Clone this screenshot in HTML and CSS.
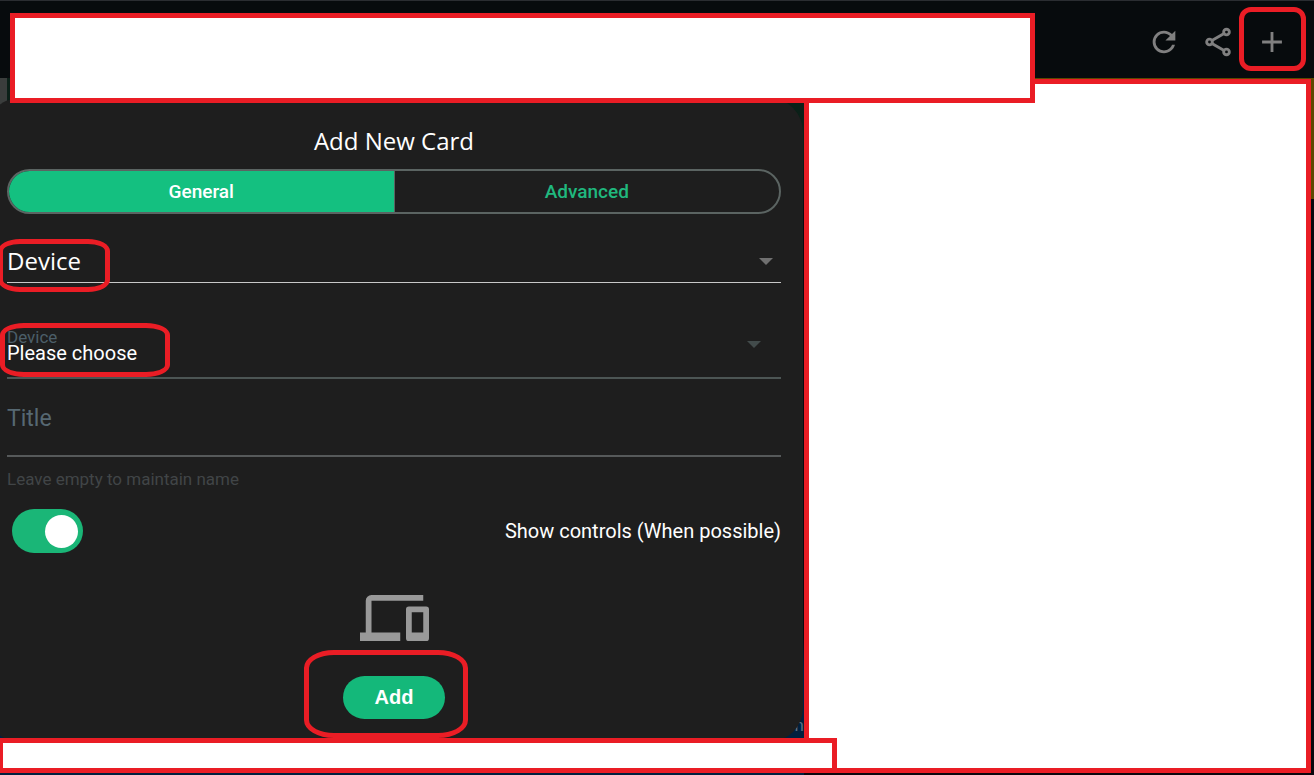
FILE: index.html
```html
<!DOCTYPE html>
<html lang="en">
<head>
    <meta charset="UTF-8">
    <meta name="viewport" content="width=device-width, initial-scale=1.0">
    <title>Add New Card</title>
    <link rel="stylesheet" href="styles.css">
</head>
<body>
    <header class="topbar">
        <button type="button" class="icon-btn" aria-label="Refresh">
            <svg viewBox="0 0 24 24"><path d="M17.65,6.35C16.2,4.9 14.21,4 12,4A8,8 0 0,0 4,12A8,8 0 0,0 12,20C15.73,20 18.84,17.45 19.73,14H17.65C16.83,16.33 14.61,18 12,18A6,6 0 0,1 6,12A6,6 0 0,1 12,6C13.66,6 15.14,6.69 16.22,7.78L13,11H20V4L17.65,6.35Z"/></svg>
        </button>
        <button type="button" class="icon-btn" aria-label="Share">
            <svg viewBox="0 0 24 24" class="outline"><path d="M16.3 6L7.7 11M7.7 13L16.3 18"/><circle cx="18" cy="5" r="2"/><circle cx="6" cy="12" r="2"/><circle cx="18" cy="19" r="2"/></svg>
        </button>
        <button type="button" class="icon-btn mark mark-plus" aria-label="Add card">
            <svg viewBox="0 0 24 24"><path d="M19,13H13V19H11V13H5V11H11V5H13V11H19V13Z"/></svg>
        </button>
    </header>

    <main class="board">
        <section class="backdrop">
            <span class="behind">n</span>
            <form class="panel">
                <h1>Add New Card</h1>
                <div class="tabs">
                    <button type="button" class="tab active">General</button>
                    <button type="button" class="tab">Advanced</button>
                </div>

                <div class="field field-type mark mark-type">
                    <select id="type" name="type" aria-label="Card type">
                        <option>Device</option>
                    </select>
                    <svg class="caret" viewBox="0 0 14 7"><path d="M0 0H14L7 7Z"/></svg>
                </div>

                <div class="field field-device mark mark-device">
                    <label for="device">Device</label>
                    <select id="device" name="device">
                        <option>Please choose</option>
                    </select>
                    <svg class="caret" viewBox="0 0 14 7"><path d="M0 0H14L7 7Z"/></svg>
                </div>

                <div class="field field-title">
                    <label for="title">Title</label>
                    <input type="text" id="title" name="title">
                </div>
                <p class="hint">Leave empty to maintain name</p>

                <div class="switch-row">
                    <input type="checkbox" id="controls" name="controls" class="switch" checked>
                    <label for="controls">Show controls (When possible)</label>
                </div>

                <svg class="devices" viewBox="0 4 24 16"><path d="M4,6H22V4H4A2,2 0 0,0 2,6V17H0V20H14V17H4V6M23,8H17A1,1 0 0,0 16,9V19A1,1 0 0,0 17,20H23A1,1 0 0,0 24,19V9A1,1 0 0,0 23,8M22,17H18V10H22V17Z"/></svg>
                <div class="mark mark-add">
                    <button type="submit" class="add-btn">Add</button>
                </div>
            </form>
        </section>
        <section class="cover cover-side"></section>
    </main>

    <!-- blanked out areas -->
    <div class="cover cover-top"></div>
    <div class="cover cover-bottom"></div>
</body>
</html>
```
FILE: styles.css
```css
*,
*::before,
*::after {
    box-sizing: border-box;
}
body {
    display: flex;
    flex-direction: column;
    position: relative;
    min-height: 100vh;
    margin: 0;
    overflow-x: hidden;
    background-color: #0b070e;
    font-family: Roboto, sans-serif;
    font-size: 20px;
    color: white;
}
button,
input,
select {
    margin: 0;
    padding: 0;
    border: none;
    background: none;
    color: inherit;
    font: inherit;
}

/* top bar */
.topbar {
    display: flex;
    justify-content: flex-end;
    height: 78px;
    padding: 6px 15px 0;
    border-top: 1px solid #2a2d31;
    background-color: #070b0d;
}
.icon-btn {
    display: flex;
    align-items: center;
    justify-content: center;
    width: 54px;
    height: 70px;
}
.icon-btn svg {
    width: 34px;
    height: 34px;
    fill: #808080;
}
.icon-btn .outline {
    fill: none;
    stroke: #808080;
    stroke-width: 2;
}

/* red outlines */
.mark {
    position: relative;
}
.mark::after {
    content: "";
    position: absolute;
    z-index: 3;
    border: 5px solid #ea1d25;
    pointer-events: none;
}
.mark-plus::after {
    inset: 0 -7px 6px -6px;
    border-radius: 12px;
}
.mark-type::after {
    top: 0;
    left: -9px;
    width: 112px;
    height: 53px;
    border-radius: 22px / 12px;
}
.mark-device::after {
    top: 0;
    left: -7px;
    width: 170px;
    height: 54px;
    border-radius: 24px / 12px;
}
.mark-add::after {
    inset: -26px -23px -19px -39px;
    border-radius: 30px / 18px;
}

/* white covers */
.cover {
    border: 5px solid #ea1d25;
    background-color: white;
}
.cover-side {
    margin: 1px 3px 2px 0;
}
.cover-top {
    position: absolute;
    top: 13px;
    left: 10px;
    width: 78%;
    height: 90px;
}
.cover-bottom {
    position: absolute;
    bottom: 2px;
    left: -2px;
    width: 839px;
    max-width: 64%;
    height: 35px;
}

.board {
    flex: 1;
    display: grid;
    grid-template-columns: 804fr 510fr;
    background: linear-gradient(#5e4700 121px, #0b070e 121px);
}
.backdrop {
    position: relative;
    padding: 20px 1px 33px 0;
    background:
        linear-gradient(#3a3d3c, #3a3d3c) 0 0 / 7px 34px no-repeat,
        linear-gradient(#0b2018 10%, #0b070e 20%, #0b070e 80%, #00203f 85%);
    overflow: hidden;
}
.behind {
    position: absolute;
    right: 0;
    bottom: 40px;
    font-size: 17px;
    color: #5a7085;
}

.panel {
    position: relative;
    display: flex;
    flex-direction: column;
    height: 100%;
    margin-left: -14px;
    padding: 25px 22px 0 21px;
    border-radius: 34px;
    background-color: #1e1e1e;
}
h1 {
    margin: 0 0 10px;
    font-family: "Open Sans", "Noto Sans", sans-serif;
    font-size: 24px;
    font-weight: 400;
    line-height: 36px;
    text-align: center;
}
.tabs {
    display: flex;
    height: 45px;
    margin-bottom: 25px;
    border: 2px solid #5b6462;
    border-radius: 23px;
    overflow: hidden;
}
.tab {
    flex: 1;
    color: #20b87e;
    font-size: 19px;
    font-weight: 500;
}
.tab.active {
    border-right: 1px solid #5b6462;
    background-color: #14c080;
    color: white;
}

/* fields */
.field select,
.field input {
    width: 100%;
    outline: none;
    appearance: none;
}
.caret {
    position: absolute;
    width: 14px;
    height: 7px;
    pointer-events: none;
}
.field-type {
    height: 44px;
    margin-bottom: 40px;
    border-bottom: 1px solid #c8c8c8;
}
.field-type select {
    height: 42px;
    font-family: "Open Sans", "Noto Sans", sans-serif;
    font-size: 24px;
}
.field-type .caret {
    top: 19px;
    right: 8px;
    fill: #707070;
}
.field-device {
    height: 56px;
    padding-top: 6px;
    border-bottom: 2px solid #4c5554;
}
.field-device label {
    display: block;
    color: #4c5f69;
    font-size: 17px;
    line-height: 16px;
}
.field-device select {
    display: block;
    height: 16px;
    line-height: 16px;
}
.field-device .caret {
    top: 18px;
    right: 20px;
    fill: #424b4b;
}
.field-title {
    display: grid;
    height: 78px;
    padding-top: 2px;
    border-bottom: 2px solid #56595a;
}
.field-title label,
.field-title input {
    grid-area: 1 / 1;
}
.field-title label {
    align-self: center;
    color: #566872;
    font-size: 23px;
}
.hint {
    margin: 12px 0 19px;
    color: #414547;
    font-size: 17px;
    line-height: 21px;
}

.switch-row {
    display: flex;
    align-items: center;
    justify-content: space-between;
    padding-left: 5px;
}
.switch {
    display: flex;
    align-items: center;
    justify-content: flex-end;
    width: 71px;
    height: 44px;
    padding-right: 5px;
    border-radius: 22px;
    background-color: #1ab677;
    appearance: none;
}
.switch::before {
    content: "";
    width: 33px;
    height: 33px;
    border-radius: 50%;
    background-color: white;
}

.devices {
    align-self: center;
    width: 69px;
    height: 46px;
    margin: 42px 0 35px;
    fill: #999999;
}
.mark-add {
    align-self: center;
}
.add-btn {
    display: block;
    width: 102px;
    height: 43px;
    border-radius: 22px;
    background-color: #14b87a;
    font-family: "Liberation Sans", Arial, sans-serif;
    font-size: 20px;
    font-weight: bold;
}
```
